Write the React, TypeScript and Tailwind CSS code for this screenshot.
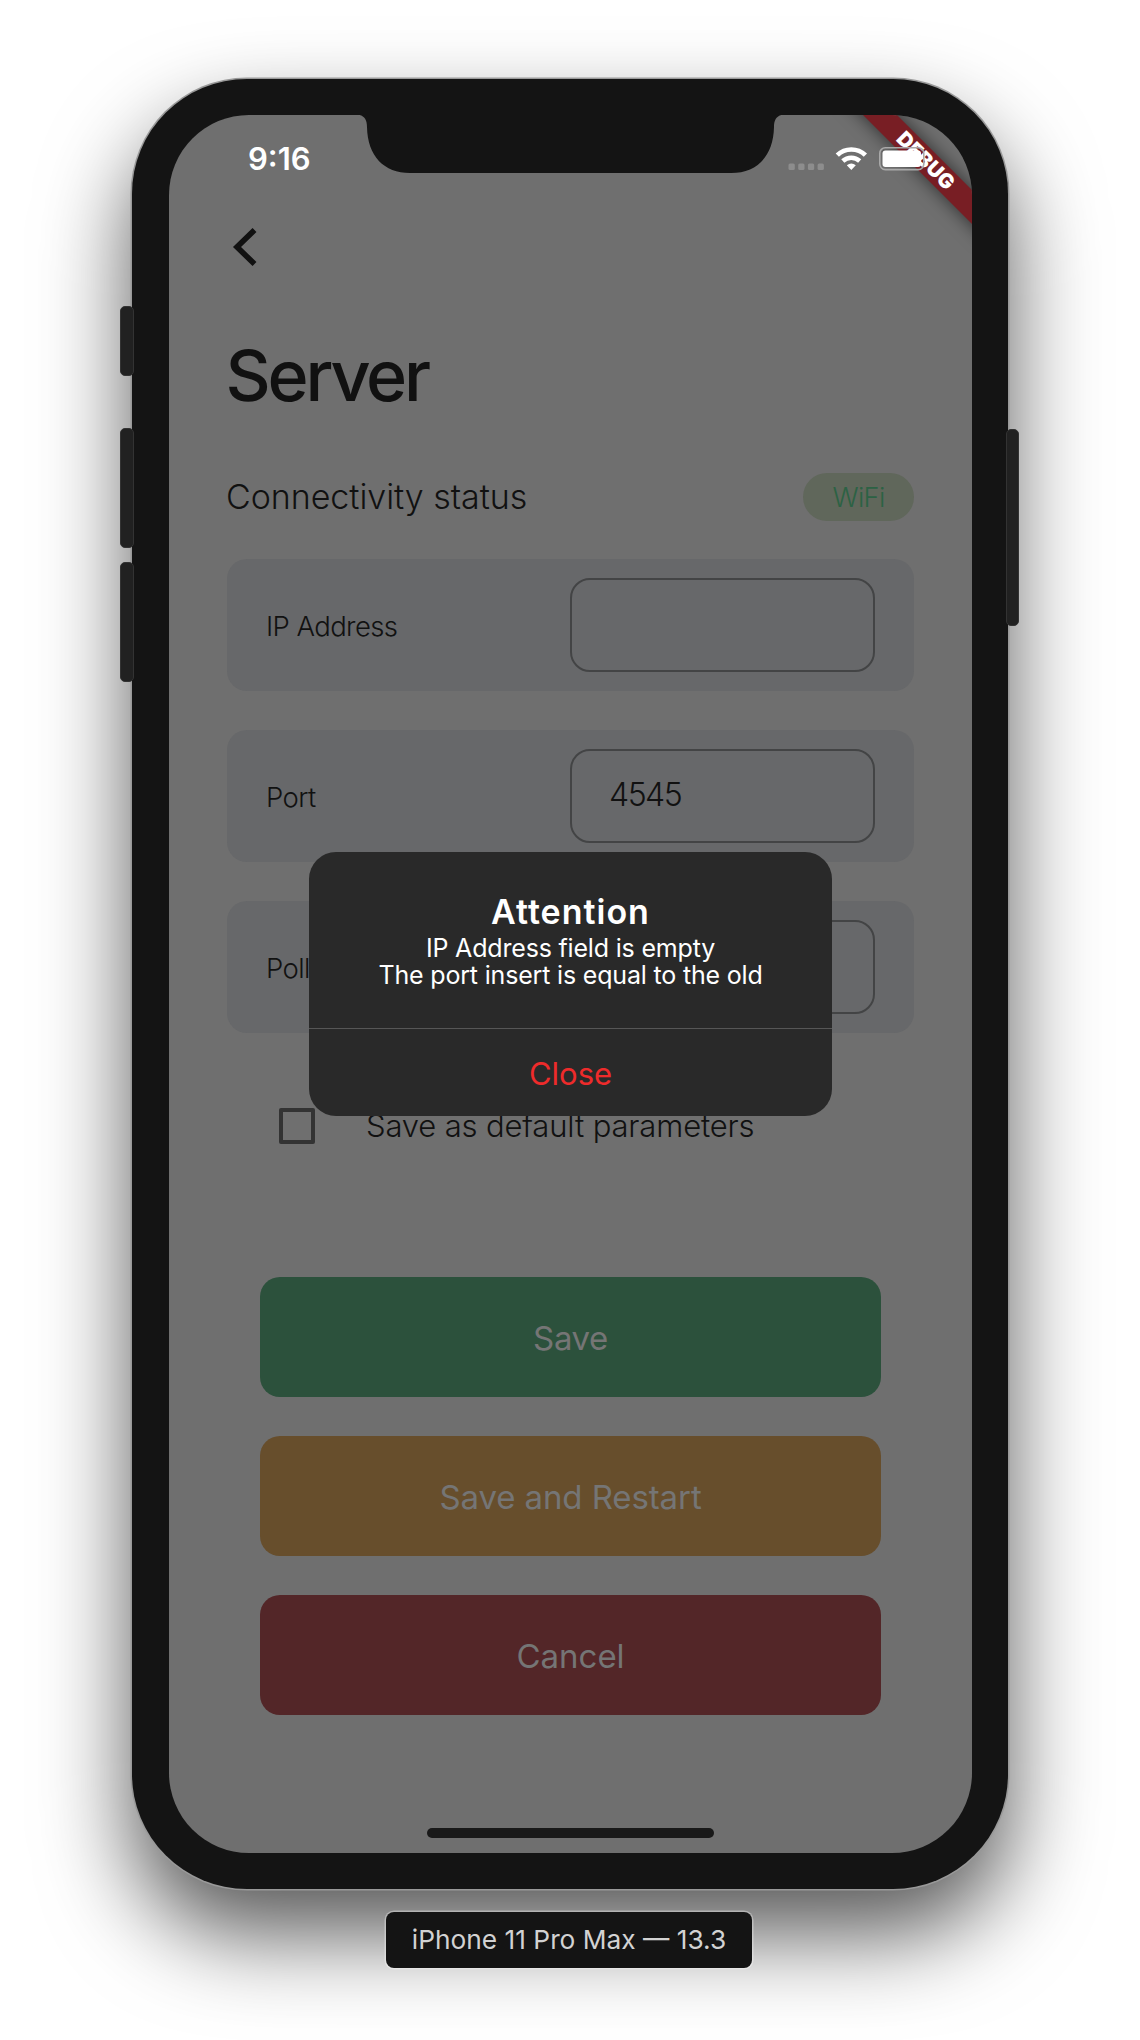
import React from "react";

function SideButton({ place }: { place: string }) {
  return <div className={`absolute rounded-[5px] border border-[#333] bg-[#212121] ${place}`} />;
}

function Row({ label, value }: { label: string; value: string }) {
  return (
    <div className="flex h-[132px] items-center justify-between rounded-[20px] bg-[#67686a] pl-[39px] pr-[39px]">
      <span className="pt-[3px] text-[27.5px] font-light tracking-[-0.6px] text-[#111]">{label}</span>
      <div className="flex h-[94px] w-[305px] items-center rounded-[20px] border-2 border-[#434445] pl-[37px]">
        <span className="relative top-[-1px] text-[32px] font-light tracking-[-1.5px] text-[#111]">{value}</span>
      </div>
    </div>
  );
}

function Action({ label, color, spacing }: { label: string; color: string; spacing: string }) {
  return (
    <button className={`flex h-[120px] w-full items-center justify-center rounded-[20px] pt-[3px] text-[33px] font-normal text-[#757575] ${color} ${spacing}`}>
      {label}
    </button>
  );
}

function StatusBar() {
  return (
    <>
      <span className="absolute left-[79px] top-[26px] text-[31px] font-semibold leading-[36px] text-white">9:16</span>
      <svg className="absolute left-[615px] top-[25px]" width="150" height="36" viewBox="784 140 150 36" fill="none">
        {[788.5, 798.2, 807.9, 817.6].map((x) => (
          <rect key={x} x={x} y="163.5" width="6.3" height="6.5" rx="1.5" fill="#8d8d8d" />
        ))}
        <g stroke="#fff" strokeWidth="4.6">
          <path d="M837.3 155.2 A20 20 0 0 1 865.4 155.2" />
          <path d="M842.8 161 A12.5 12.5 0 0 1 859.7 161" />
        </g>
        <path d="M851.3 170 L846.8 165.300 Q851.3 161.500 855.8 165.300 Z" fill="#fff" />
        <rect x="879.8" y="147.8" width="44" height="21.8" rx="5.5" stroke="#a9a9a9" strokeWidth="1.6" />
        <rect x="882.5" y="150.5" width="38.5" height="16.5" rx="3" fill="#fff" />
      </svg>
    </>
  );
}

export default function App() {
  return (
    <div className="flex h-[2040px] w-[1140px] flex-col items-center overflow-hidden bg-white pt-[79px] font-[Inter,sans-serif]">
      <div className="relative h-[1810px] w-[876px] rounded-[115px] bg-[#141414] px-[37px] pt-9 shadow-[0_0_0_1.5px_#999,0_45px_90px_rgba(0,0,0,0.66)]">
        <SideButton place="left-[-12px] top-[227px] h-[70px] w-[14px]" />
        <SideButton place="left-[-12px] top-[349px] h-[120px] w-[14px]" />
        <SideButton place="left-[-12px] top-[483px] h-[120px] w-[14px]" />
        <SideButton place="right-[-11px] top-[350px] h-[197px] w-[13px]" />

        <div className="relative h-[1738px] w-[803px] overflow-hidden rounded-[80px] bg-[#6f6f6f]">
          <div className="flex flex-col pl-[58px] pr-[58px] pt-[112px]">
            <svg className="ml-[5px]" width="26" height="40" viewBox="0 0 26 40" fill="none">
              <path d="M22.5 3 L5 20 L22.5 37" stroke="#111" strokeWidth="5.6" />
            </svg>
            <h1 className="ml-[-1.500px] mt-[66px] text-[70px] font-medium leading-[86px] tracking-[-3.2px] text-[#111]">Server</h1>
            <div className="mt-[53px] flex h-12 items-center justify-between">
              <span className="ml-[-1px] text-[34px] font-light tracking-[-0.05px] text-[#111]">Connectivity status</span>
              <span className="mt-0.5 flex h-12 w-[111px] items-center justify-center rounded-full bg-[#60675b] pt-0.5 text-[27px] font-light tracking-[-0.6px] text-[#2c6244]">WiFi</span>
            </div>
            <div className="mt-[39px] flex flex-col gap-[39px]">
              <Row label="IP Address" value="" />
              <Row label="Port" value="4545" />
              <Row label="Poll" value="" />
            </div>
            <label className="mt-[69px] flex h-[48px] items-center pl-[52px]">
              <span className="size-[36px] rounded-[2px] border-4 border-[#333]" />
              <span className="ml-[51px] text-[31px] font-light tracking-[-0.15px] text-[#111]">Save as default parameters</span>
            </label>
            <div className="mt-[127px] flex flex-col gap-[39px] px-[33px]">
              <Action label="Save" color="bg-[#2c513c]" spacing="tracking-[-0.4px]" />
              <Action label="Save and Restart" color="bg-[#674e2c]" spacing="tracking-[-0.1px]" />
              <Action label="Cancel" color="bg-[#532628]" spacing="tracking-[0px]" />
            </div>
          </div>

          <svg className="absolute left-0 top-0" width="803" height="60" viewBox="169 115 803 60">
            <path d="M355 114.5 C363 114.5 367 118 367 127 C367.500 156 384 173 410 173 H731 C757 173 773.500 156 774 127 C774 118 778 114.500 786 114.500 Z" fill="#141414" />
          </svg>

          <div className="absolute left-[140px] top-[737px] flex h-[264px] w-[523px] flex-col overflow-hidden rounded-[27px] bg-[#292929] text-center text-white">
            <div className="h-[177px] border-b border-[#565656] pt-[39px]">
              <h2 className="text-[34px] font-semibold leading-[42px] tracking-[1px]">Attention</h2>
              <p className="mt-0.5 text-[25px] leading-[27px] tracking-[-0.18px]">IP Address field is empty<br />The port insert is equal to the old</p>
            </div>
            <button className="flex flex-1 items-center justify-center pt-[3px] text-[31px] text-[#ee2b2b]">Close</button>
          </div>

          <div className="absolute left-[656px] top-[33px] flex h-[24px] w-[200px] rotate-45 items-center justify-center bg-[#781e24] pl-0.5 text-[20.5px] font-black tracking-[0.2px] text-white shadow-[0_0_18px_rgba(0,0,0,0.6)]">
            DEBUG
          </div>
          <StatusBar />
          <div className="absolute left-[258px] top-[1713px] h-[10px] w-[287px] rounded-full bg-[#191919]" />
        </div>
      </div>
      <div className="relative right-[1px] mt-[23px] flex h-14 w-[366px] items-center justify-center rounded-[8px] bg-[#141414] pb-px text-[26.3px] text-[#d2d2d2] shadow-[0_0_0_1.5px_rgba(255,255,255,0.35)]">
        iPhone 11 Pro Max — 13.3
      </div>
    </div>
  );
}
